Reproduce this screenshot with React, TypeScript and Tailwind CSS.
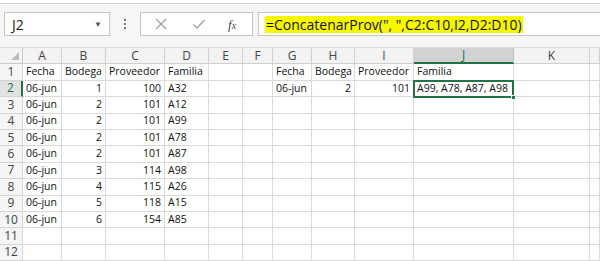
import React from 'react';

const cols = ['A', 'B', 'C', 'D', 'E', 'F', 'G', 'H', 'I', 'J', 'K', ''];

// cell values per row: [A, B, C, D, E, F, G, H, I, J, K, L]
const rows: string[][] = [
  ['Fecha', 'Bodega', 'Proveedor', 'Familia', '', '', 'Fecha', 'Bodega', 'Proveedor', 'Familia', '', ''],
  ['06-jun', '1', '100', 'A32', '', '', '06-jun', '2', '101', 'A99, A78, A87, A98', '', ''],
  ['06-jun', '2', '101', 'A12', '', '', '', '', '', '', '', ''],
  ['06-jun', '2', '101', 'A99', '', '', '', '', '', '', '', ''],
  ['06-jun', '2', '101', 'A78', '', '', '', '', '', '', '', ''],
  ['06-jun', '2', '101', 'A87', '', '', '', '', '', '', '', ''],
  ['06-jun', '3', '114', 'A98', '', '', '', '', '', '', '', ''],
  ['06-jun', '4', '115', 'A26', '', '', '', '', '', '', '', ''],
  ['06-jun', '5', '118', 'A15', '', '', '', '', '', '', '', ''],
  ['06-jun', '6', '154', 'A85', '', '', '', '', '', '', '', ''],
  ['', '', '', '', '', '', '', '', '', '', '', ''],
  ['', '', '', '', '', '', '', '', '', '', '', ''],
];

const isNumber = (v: string) => /^\d+$/.test(v);

const gridCols = 'grid-cols-[23px_39px_44px_59px_44px_34px_30px_39px_43px_59px_100px_76px_1fr]';

const FormulaBar: React.FC = () => (
  <div className="h-[45px] bg-[#f6f6f6] border-t border-[#d4d4d4] mt-[3px] flex items-start pt-[8px] pl-[4px] border-b border-b-[#dcdcdc]">
    {/* Name box */}
    <div className="w-[106px] h-[24px] bg-white border border-[#c6c6c6] flex items-center justify-between pl-[7px] pr-[7px]">
      <span className="text-[14px] text-[#222]">J2</span>
      <span className="text-[8px] text-[#555]">▼</span>
    </div>
    <div className="w-[30px] h-[24px] flex flex-col items-center justify-center gap-[2px]">
      <span className="w-[2px] h-[2px] bg-[#777]" />
      <span className="w-[2px] h-[2px] bg-[#777]" />
      <span className="w-[2px] h-[2px] bg-[#777]" />
    </div>
    {/* Cancel / enter / insert function */}
    <div className="w-[113px] h-[24px] bg-white border border-[#c6c6c6] flex items-center pl-[13px] gap-[24px]">
      <svg width="14" height="14" viewBox="0 0 14 14" className="text-[#a0a0a0]">
        <path d="M2 2 L12 12 M12 2 L2 12" stroke="currentColor" strokeWidth="1.3" fill="none" />
      </svg>
      <svg width="14" height="14" viewBox="0 0 14 14" className="text-[#a0a0a0]">
        <path d="M1.5 7.5 L5 11 L12.5 3" stroke="currentColor" strokeWidth="1.3" fill="none" />
      </svg>
      <span className="-ml-[2px] text-[13px] italic text-[#444] font-['Liberation_Serif',serif] leading-none">
        f<span className="text-[10px]">x</span>
      </span>
    </div>
    {/* Formula input */}
    <div className="ml-[5px] flex-1 h-[24px] bg-white border border-r-0 border-[#c6c6c6] flex items-center pl-[6px]">
      <span className="bg-[#f7f700] text-[14px] text-[#111] leading-[17px] px-[1px]">
        =ConcatenarProv(&quot;, &quot;,C2:C10,I2,D2:D10)
      </span>
    </div>
  </div>
);

const Sheet: React.FC = () => (
  <div className={`grid ${gridCols} auto-rows-[16.4px] text-[10.5px] text-[#111]`}>
    {/* Column header row */}
    <div className="bg-[#f3f3f3] border-r border-b border-[#c9c9c9] relative">
      <svg width="8" height="8" viewBox="0 0 8 8" className="absolute right-[3px] bottom-[3px]">
        <path d="M8 0 L8 8 L0 8 Z" fill="#bdbdbd" />
      </svg>
    </div>
    {cols.map((c, i) =>
      c === 'J' ? (
        <div
          key={i}
          className="bg-[#d3d3d3] border-r border-[#c0c0c0] border-b-2 border-b-[#217346] flex items-center justify-center text-[#217346] text-[12px]"
        >
          {c}
        </div>
      ) : (
        <div
          key={i}
          className="bg-[#f3f3f3] border-r border-b border-[#d0d0d0] flex items-center justify-center text-[#444] text-[12px]"
        >
          {c}
        </div>
      )
    )}
    {/* Data rows */}
    {rows.map((r, ri) => (
      <React.Fragment key={ri}>
        {ri === 1 ? (
          <div className="bg-[#e2e2e2] border-r-2 border-r-[#217346] border-b border-[#d4d4d4] flex items-center justify-center text-[#217346] text-[12px]">
            {ri + 1}
          </div>
        ) : (
          <div className="bg-[#f5f5f5] border-r border-b border-[#d4d4d4] flex items-center justify-center text-[#444] text-[12px]">
            {ri + 1}
          </div>
        )}
        {r.map((v, ci) =>
          ri === 1 && ci === 9 ? (
            <div
              key={ci}
              className="relative border-2 border-[#217346] -mt-[1px] -ml-[1px] h-[18px] flex items-center px-[2px] whitespace-nowrap"
            >
              {v}
              <span className="absolute -right-[4px] -bottom-[4px] w-[5px] h-[5px] bg-[#217346] border border-white" />
            </div>
          ) : (
            <div
              key={ci}
              className={`border-r border-b border-[#dadada] flex items-center px-[3px] whitespace-nowrap ${
                isNumber(v) ? 'justify-end' : 'justify-start'
              }`}
            >
              {v}
            </div>
          )
        )}
      </React.Fragment>
    ))}
  </div>
);

export default function App() {
  return (
    <div className="w-[600px] h-[261px] overflow-hidden bg-white font-['Open_Sans',sans-serif]">
      <FormulaBar />
      <Sheet />
    </div>
  );
}
